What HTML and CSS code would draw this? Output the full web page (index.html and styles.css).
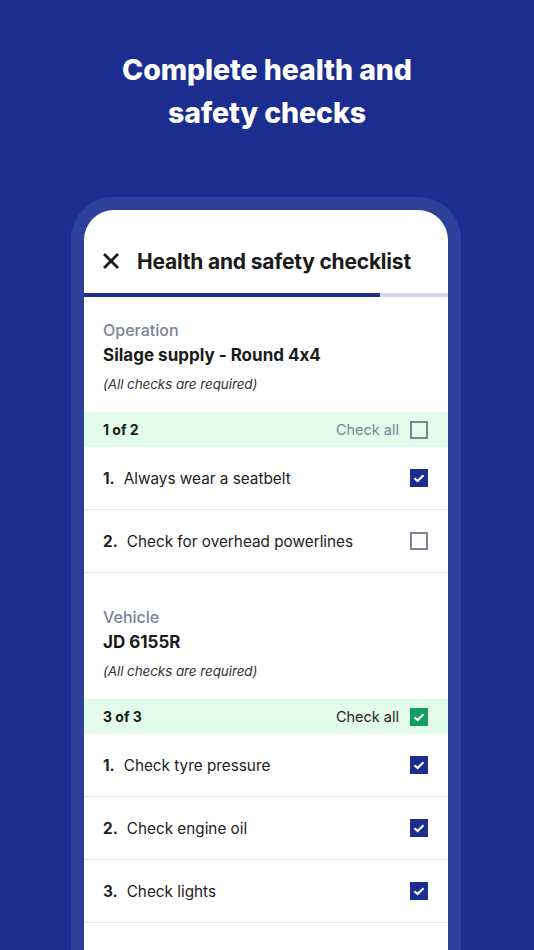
FILE: index.html
```html
<!DOCTYPE html>
<html>
<head>
<meta charset="utf-8">
<link rel="stylesheet" href="styles.css">
</head>
<body>
<h1 class="hero">Complete health and<br>safety checks</h1>
<div class="frame">
  <div class="screen">
    <div class="header">
      <svg class="close" width="16" height="16" viewBox="0 0 16 16"><path d="M2 2L14 14M14 2L2 14" stroke="#1a1a1a" stroke-width="2.8" stroke-linecap="square"/></svg>
      <span class="title">Health and safety checklist</span>
    </div>
    <div class="progress"><div class="progress-fill" style="width:81.3%"></div></div>

    <div class="section">
      <div class="label">Operation</div>
      <div class="name">Silage supply - Round 4x4</div>
      <div class="note">(All checks are required)</div>
    </div>
    <div class="band">
      <span class="count">1 of 2</span>
      <span class="checkall">Check all <span class="box"></span></span>
    </div>
    <div class="row"><span class="num">1.</span><span class="text">Always wear a seatbelt</span><span class="box checked"><svg viewBox="0 0 18 18" width="18" height="18"><path d="M4.5 9.2L7.6 12L13.5 6.3" fill="none" stroke="#fff" stroke-width="2.2"/></svg></span></div>
    <div class="row"><span class="num">2.</span><span class="text">Check for overhead powerlines</span><span class="box"></span></div>

    <div class="section second">
      <div class="label">Vehicle</div>
      <div class="name">JD 6155R</div>
      <div class="note">(All checks are required)</div>
    </div>
    <div class="band">
      <span class="count">3 of 3</span>
      <span class="checkall done">Check all <span class="box green"><svg viewBox="0 0 18 18" width="18" height="18"><path d="M4.5 9.2L7.6 12L13.5 6.3" fill="none" stroke="#fff" stroke-width="2.2"/></svg></span></span>
    </div>
    <div class="row"><span class="num">1.</span><span class="text">Check tyre pressure</span><span class="box checked"><svg viewBox="0 0 18 18" width="18" height="18"><path d="M4.5 9.2L7.6 12L13.5 6.3" fill="none" stroke="#fff" stroke-width="2.2"/></svg></span></div>
    <div class="row"><span class="num">2.</span><span class="text">Check engine oil</span><span class="box checked"><svg viewBox="0 0 18 18" width="18" height="18"><path d="M4.5 9.2L7.6 12L13.5 6.3" fill="none" stroke="#fff" stroke-width="2.2"/></svg></span></div>
    <div class="row"><span class="num">3.</span><span class="text">Check lights</span><span class="box checked"><svg viewBox="0 0 18 18" width="18" height="18"><path d="M4.5 9.2L7.6 12L13.5 6.3" fill="none" stroke="#fff" stroke-width="2.2"/></svg></span></div>
    <div class="spacer"></div>
  </div>
</div>
</body>
</html>
```
FILE: styles.css
```css
html, body {
  margin: 0;
  padding: 0;
}
body {
  width: 534px;
  height: 950px;
  overflow: hidden;
  background: #1b2e8f;
  font-family: Inter, "Liberation Sans", sans-serif;
  font-feature-settings: "calt" 0;
}
.hero {
  margin: 48px 0 0;
  color: #fff;
  font-weight: 800;
  font-size: 28.5px;
  line-height: 43px;
  text-align: center;
  letter-spacing: -0.1px;
}
.frame {
  margin: 63px 73px 0 71px;
  background: #2e409a;
  border-radius: 42px 42px 0 0;
  padding: 13px 13px 0;
  height: 760px;
}
.screen {
  background: #fff;
  border-radius: 30px 30px 0 0;
  height: 100%;
  overflow: hidden;
}
.header {
  height: 64px;
  padding: 19px 0 0 19px;
  display: flex;
  align-items: center;
  gap: 18px;
}
.close { flex: none; }
.title {
  font-weight: 700;
  font-size: 21px;
  color: #1a1a1a;
  letter-spacing: -0.2px;
}
.progress {
  height: 4px;
  background: #d2d6ea;
}
.progress-fill {
  height: 100%;
  background: #1b2e8f;
}
.section {
  padding: 22px 19px 18px;
}
.section.second { padding-top: 33px; }
.label {
  font-size: 16px;
  line-height: 22px;
  color: #7b8397;
  font-weight: 500;
}
.name {
  margin-top: 2px;
  font-size: 17px;
  line-height: 24px;
  font-weight: 700;
  color: #1a1a1a;
}
.note {
  margin-top: 7px;
  font-size: 13.5px;
  line-height: 20px;
  font-style: italic;
  color: #333;
  letter-spacing: -0.1px;
}
.band {
  height: 35px;
  background: #e3fbea;
  display: flex;
  align-items: center;
  justify-content: space-between;
  padding: 0 20px 0 19px;
}
.count {
  font-size: 14px;
  font-weight: 700;
  color: #1a1a1a;
}
.checkall {
  display: flex;
  align-items: center;
  gap: 11px;
  font-size: 14.5px;
  color: #7b8397;
}
.checkall.done { color: #222; }
.box {
  width: 18px;
  height: 18px;
  box-sizing: border-box;
  border: 2px solid #7b8397;
  display: inline-block;
  flex: none;
  position: relative;
}
.box svg {
  position: absolute;
  left: -2px;
  top: -2px;
}
.box.checked {
  background: #1b2e8f;
  border-color: #1b2e8f;
}
.box.green {
  background: #0f9e5e;
  border-color: #0f9e5e;
}
.row {
  height: 62px;
  border-bottom: 1px solid #e5e6ea;
  display: flex;
  align-items: center;
  padding: 0 20px 0 19px;
  font-size: 15.3px;
  color: #222;
}
.num {
  font-weight: 700;
  margin-right: 9px;
  flex: none;
}
.text {
  flex: 1;
}
.spacer { height: 40px; }
```
